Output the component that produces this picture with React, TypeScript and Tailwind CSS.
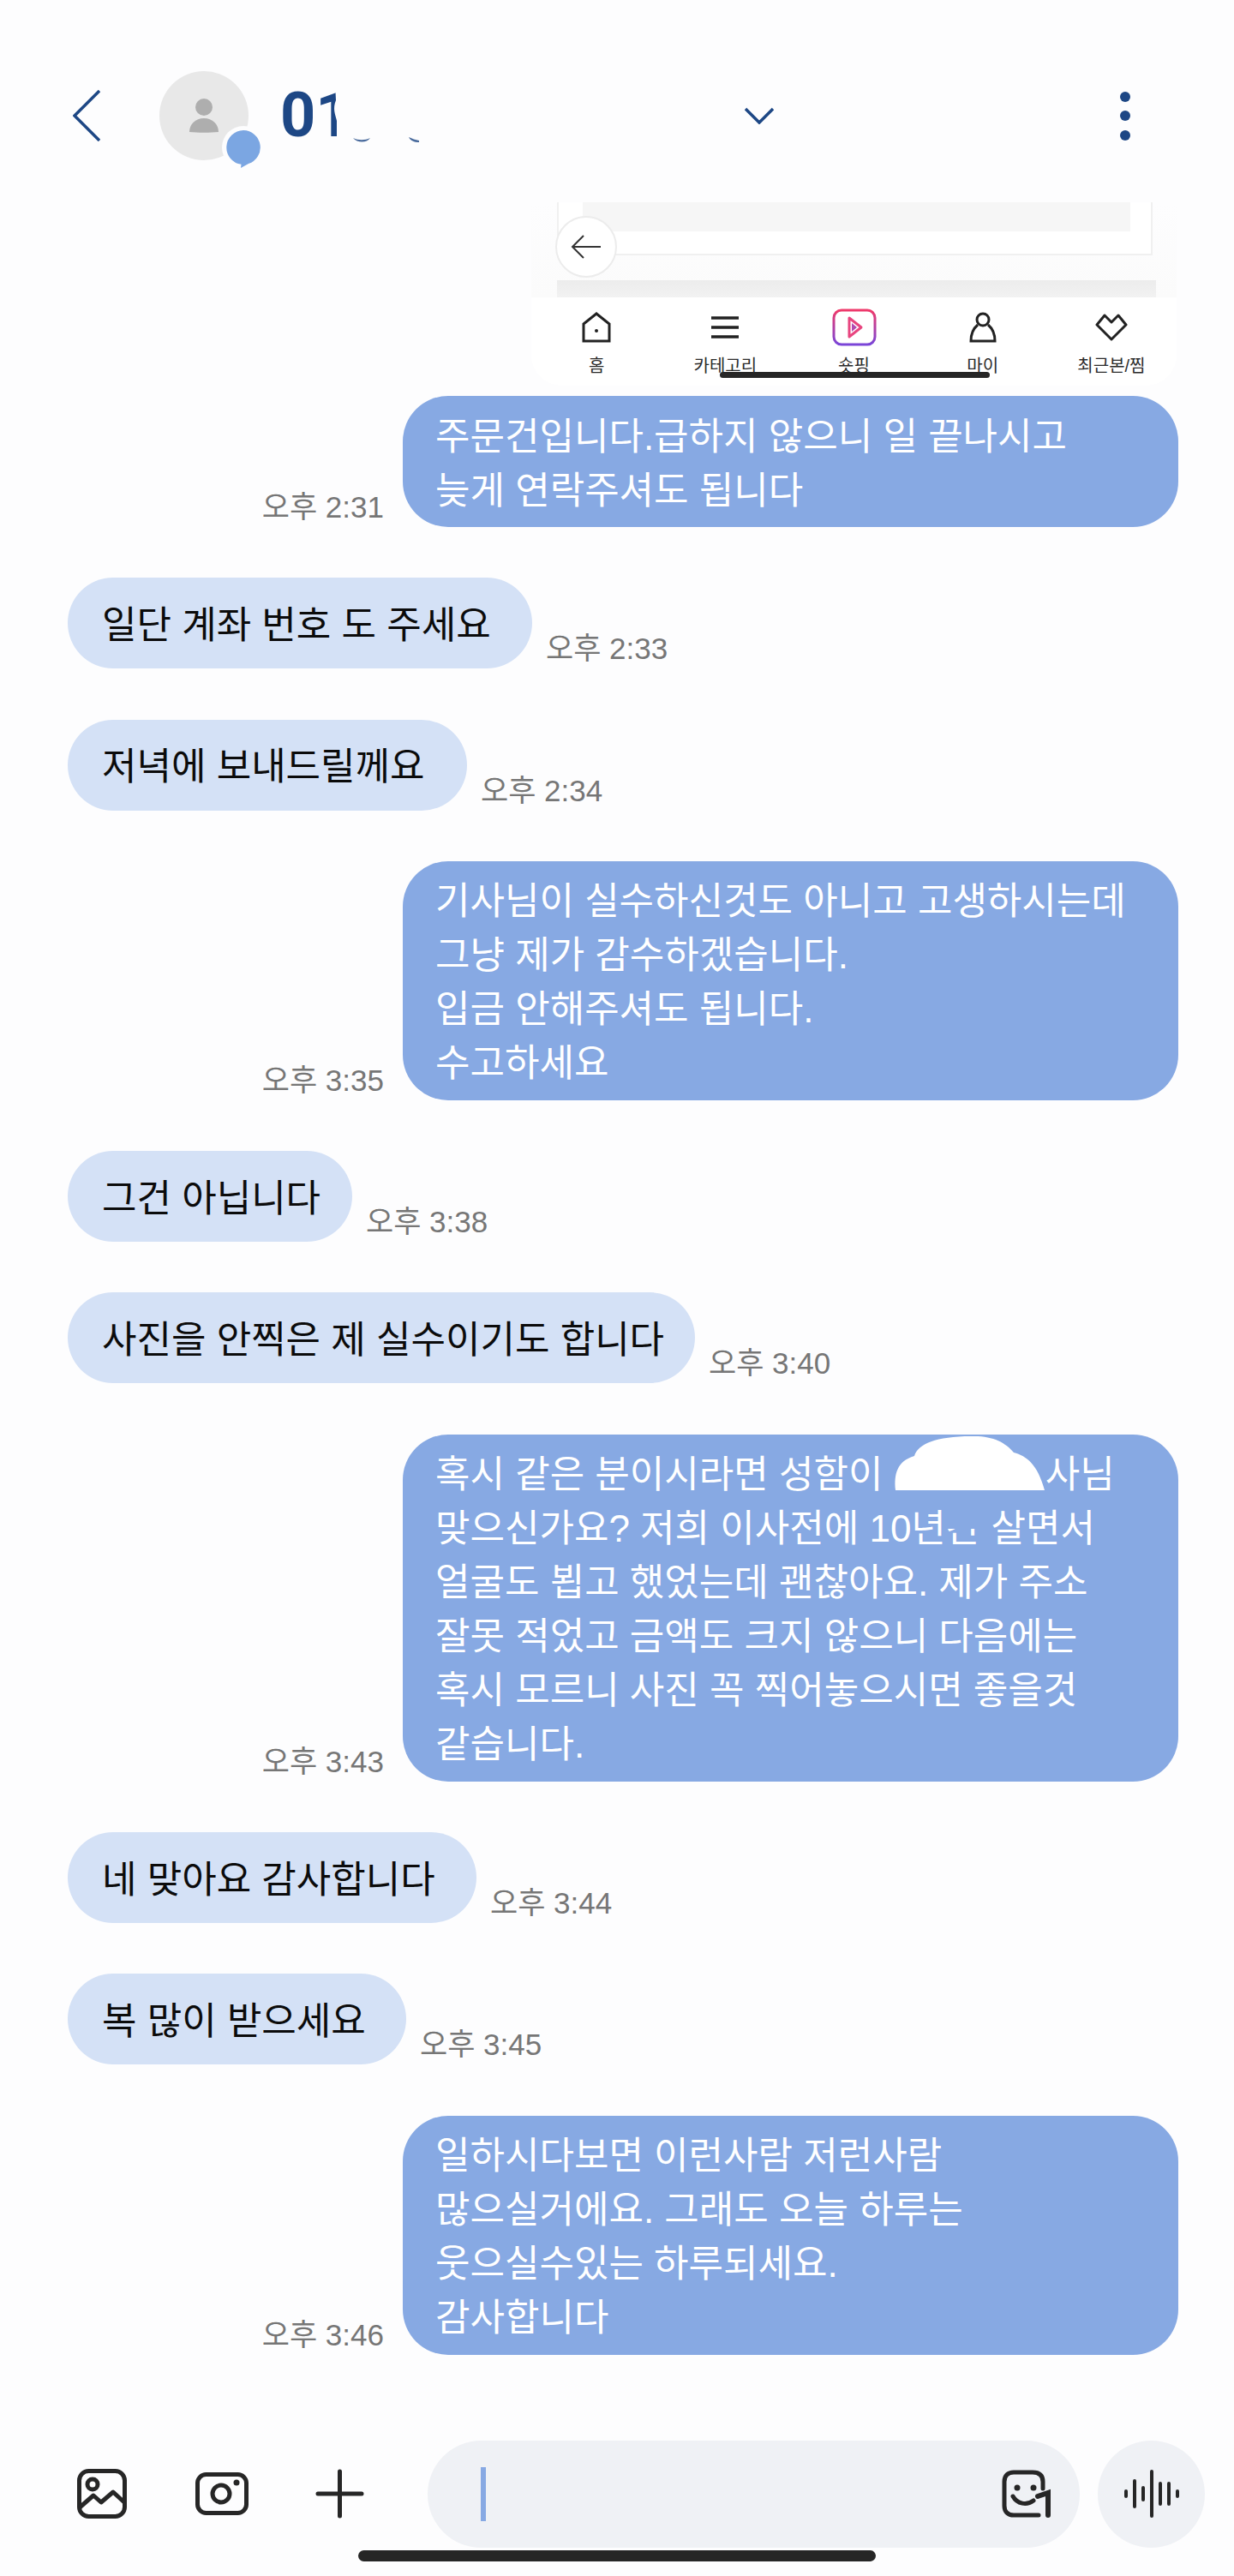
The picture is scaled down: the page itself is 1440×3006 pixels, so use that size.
function Time({ children }: { children: string }) {
  return <span className="mb-[3px] whitespace-nowrap text-[35px] leading-[40px] text-[#767676]">{children}</span>;
}

function Incoming({ text, time, width }: { text: string; time: string; width: string }) {
  return (
    <div className="flex items-end gap-[16px] pl-[79px]">
      <div className={`flex h-[106px] items-center rounded-[53px] bg-[#d4e1f6] pt-[4px] pl-[40px] whitespace-nowrap text-[#0b0b0b] ${width}`}>{text}</div>
      <Time>{time}</Time>
    </div>
  );
}

function Outgoing({ lines, time }: { lines: React.ReactNode[]; time: string }) {
  return (
    <div className="flex items-end justify-end gap-[22px] pr-[65px]">
      <Time>{time}</Time>
      <div className="w-[905px] rounded-[53px] bg-[#87a9e3] pt-[15.5px] pb-[11.5px] pl-[38px] text-white">
        {lines.map((line, i) => (
          <div key={i} className="whitespace-nowrap">{line}</div>
        ))}
      </div>
    </div>
  );
}

function NavItem({ label, children }: { label: string; children: React.ReactNode }) {
  return (
    <div className="flex w-[151px] flex-col items-center">
      <div className="flex h-[46px] items-center justify-center">{children}</div>
      <span className="mt-[9px] whitespace-nowrap text-[20px] leading-[26px] text-[#2b2b2b]">{label}</span>
    </div>
  );
}

function Attachment() {
  return (
    <div className="relative ml-auto mr-[67px] w-[753px] overflow-hidden rounded-b-[36px] bg-white">
      <div className="h-[111px] bg-gradient-to-b from-[#fdfdfe] to-[#fbfbfb] px-[30px]">
        <div className="ml-0 h-[62px] w-[695px] border-r-2 border-b-2 border-l-2 border-[#f0f0f0] bg-white px-[28px]">
          <div className="h-[34px] w-[639px] bg-[#f6f6f6]" />
        </div>
        <div className="mt-[29px] h-[20px] w-[699px] bg-gradient-to-b from-[#ececec] to-[#f2f2f2]" />
      </div>
      <div className="absolute top-[16px] left-[28px] flex h-[72px] w-[72px] items-center justify-center rounded-full border-2 border-[#ececec] bg-white">
        <svg width="38" height="30" viewBox="0 0 38 30" fill="none" stroke="#333" strokeWidth="2">
          <path d="M36 15H3M16 2 3 15l13 13" />
        </svg>
      </div>
      <div className="flex h-[103px] justify-between bg-white px-[1px] pt-[12px]">
        <NavItem label="홈">
          <svg width="34" height="36" viewBox="0 0 34 36" fill="none" stroke="#222" strokeWidth="3">
            <path d="M2 14 17 2l15 12v20H2z" />
            <circle cx="17" cy="22" r="2" fill="#222" stroke="none" />
          </svg>
        </NavItem>
        <NavItem label="카테고리">
          <svg width="34" height="28" viewBox="0 0 34 28" fill="none" stroke="#222" strokeWidth="3.5">
            <path d="M1 3h32M1 14h32M1 25h32" />
          </svg>
        </NavItem>
        <NavItem label="숏핑">
          <svg width="52" height="44" viewBox="0 0 52 44" fill="none">
            <defs>
              <linearGradient id="shop" x1="0" y1="0" x2="0" y2="1">
                <stop offset="0" stopColor="#ef3a6b" />
                <stop offset="1" stopColor="#7a45d8" />
              </linearGradient>
            </defs>
            <rect x="2" y="2" width="48" height="40" rx="9" stroke="url(#shop)" strokeWidth="3" />
            <path d="M20 11 34 22 20 33z" stroke="#e8457f" strokeWidth="3" strokeLinejoin="round" />
            <path d="M23 17 29 22 23 27z" fill="#b14bb0" />
          </svg>
        </NavItem>
        <NavItem label="마이">
          <svg width="32" height="36" viewBox="0 0 32 36" fill="none" stroke="#222" strokeWidth="3">
            <circle cx="16" cy="9" r="7" />
            <path d="M10 15C4 20 2 26 2 34h28c0-8-2-14-8-19" />
          </svg>
        </NavItem>
        <NavItem label="최근본/찜">
          <svg width="38" height="34" viewBox="0 0 38 34" fill="none" stroke="#222" strokeWidth="3">
            <path d="M19 31 2 14l9-11 8 8 8-8 9 11z" strokeLinejoin="round" />
          </svg>
        </NavItem>
      </div>
      <div className="absolute top-[198px] left-[220px] h-[7px] w-[315px] rounded-full bg-[#262626]" />
    </div>
  );
}

function Header() {
  return (
    <div className="flex h-[236px] items-center pt-[34px] pl-[85px] text-[#1d4785]">
      <svg width="32" height="60" viewBox="0 0 32 60" fill="none" stroke="currentColor" strokeWidth="3.5">
        <path d="M31 1 2 30l29 29" />
      </svg>
      <div className="relative ml-[69px] flex h-[104px] w-[104px] flex-col items-center justify-center rounded-full bg-[#e8e8e8]">
        <svg width="36" height="40" viewBox="0 0 36 40" fill="#aeaeae">
          <circle cx="18" cy="10" r="10" />
          <path d="M1 39c0-9 7-16 17-16s17 7 17 16c-10 1-24 1-34 0z" />
        </svg>
        <div className="absolute top-[64px] left-[73px] h-[50px] w-[50px] rounded-full bg-[#fdfdfe] p-[5px]">
          <svg width="40" height="44" viewBox="0 0 40 44" fill="#7ba6e2">
            <path d="M20 0a20 20 0 0 1 6 39l-9 5 .5-4.2A20 20 0 0 1 20 0z" />
          </svg>
        </div>
      </div>
      <div className="relative ml-[37px] h-[80px] w-[80px] font-['Roboto',sans-serif] text-[72px] leading-[80px] font-bold">
        01
        <svg width="62" height="70" viewBox="0 0 62 70" fill="#fdfdfe" className="absolute top-[2px] left-[56px]">
          <path d="M8 0h54v70H10V44C8 36 5 30 9 20z" />
        </svg>
        <svg width="90" height="8" viewBox="0 0 90 8" fill="currentColor" className="absolute top-[65px] left-[84px] opacity-80">
          <path d="M1 1c6 3 14 3 20 0-4 6-15 6-20 0zM66 0c4 2 8 3 12 4v2c-6 0-10-2-12-6z" />
        </svg>
      </div>
      <div className="ml-[462px]">
        <svg width="34" height="20" viewBox="0 0 34 20" fill="none" stroke="currentColor" strokeWidth="3.5">
          <path d="M1 2 17 18 33 2" />
        </svg>
      </div>
      <div className="ml-[404px] flex flex-col gap-[10.5px]">
        <span className="h-[12px] w-[12px] rounded-full bg-[#1d4785]" />
        <span className="h-[12px] w-[12px] rounded-full bg-[#1d4785]" />
        <span className="h-[12px] w-[12px] rounded-full bg-[#1d4785]" />
      </div>
    </div>
  );
}

function Composer() {
  return (
    <div className="mt-[100px] flex items-center pl-[90px]">
      <svg width="58" height="58" viewBox="0 0 58 58" fill="none" stroke="#262626" strokeWidth="5" className="shrink-0">
        <rect x="2.5" y="2.5" width="53" height="53" rx="11" />
        <circle cx="18" cy="18" r="6" />
        <path d="M3 45 19 31l9 8 14-12 13 12" strokeLinejoin="round" />
      </svg>
      <svg width="62" height="50" viewBox="0 0 62 50" fill="none" stroke="#262626" strokeWidth="5" className="ml-[80px] shrink-0">
        <rect x="2.5" y="2.5" width="57" height="45" rx="10" />
        <circle cx="30" cy="25" r="10" />
        <circle cx="48" cy="12" r="3.5" fill="#262626" stroke="none" />
      </svg>
      <svg width="57" height="58" viewBox="0 0 57 58" fill="none" stroke="#262626" strokeWidth="5" strokeLinecap="round" className="ml-[78px] shrink-0">
        <path d="M28.5 3v52M3 29h51" />
      </svg>
      <div className="ml-[74px] flex h-[125px] w-[761px] items-center justify-between rounded-full bg-[#eff1f5] pr-[33px] pl-[62px]">
        <div className="h-[63px] w-[6px] bg-[#87a9e3]" />
        <svg width="58" height="56" viewBox="0 0 58 56" fill="none" stroke="#262626" strokeWidth="5" strokeLinecap="round">
          <path d="M43 53H14C7 53 3 49 3 42V14C3 7 7 3 14 3h22c8 0 12 4 12 11v8" />
          <circle cx="18" cy="21" r="3.5" fill="#262626" stroke="none" />
          <circle cx="37" cy="21" r="3.5" fill="#262626" stroke="none" />
          <path d="M13 31c5 9 16 11 24 5" />
          <path d="M42 31 54 27v26" strokeWidth="6" />
        </svg>
      </div>
      <div className="ml-[21px] flex h-[125px] w-[125px] items-center justify-center rounded-full bg-[#eff1f5]">
        <svg width="66" height="58" viewBox="0 0 66 58" fill="none" stroke="#262626" strokeWidth="4" strokeLinecap="round">
          <path d="M3 26v6M13 14v30M23 22v14M33 3v52M43 17v24M53 17v24M63 26v6" />
        </svg>
      </div>
    </div>
  );
}

export default function App() {
  return (
    <div className="h-[3006px] w-[1440px] overflow-hidden bg-[#fdfdfe] font-['Liberation_Sans','Noto_Sans_CJK_KR',sans-serif] text-[44px] leading-[63px]">
      <Header />
      <Attachment />
      <div className="mt-[12px] flex flex-col gap-[59.3px]">
        <Outgoing time="오후 2:31" lines={["주문건입니다.급하지 않으니 일 끝나시고", "늦게 연락주셔도 됩니다"]} />
        <Incoming text="일단 계좌 번호 도 주세요" time="오후 2:33" width="w-[542px]" />
        <Incoming text="저녁에 보내드릴께요" time="오후 2:34" width="w-[466px]" />
        <Outgoing
          time="오후 3:35"
          lines={["기사님이 실수하신것도 아니고 고생하시는데", "그냥 제가 감수하겠습니다.", "입금 안해주셔도 됩니다.", "수고하세요"]}
        />
        <Incoming text="그건 아닙니다" time="오후 3:38" width="w-[332px]" />
        <Incoming text="사진을 안찍은 제 실수이기도 합니다" time="오후 3:40" width="w-[732px]" />
        <Outgoing
          time="오후 3:43"
          lines={[
            <>
              혹시 같은 분이시라면 성함이{" "}
              <span className="relative inline-block h-[40px] w-[177px]">
                <svg width="177" height="64" viewBox="0 0 177 64" fill="white" className="absolute -top-[21px] left-0">
                  <path d="M2 64C0 45 4 30 24 24 28 10 50 1 90 1c25-1 40 7 50 19 15 4 28 14 36 44z" />
                </svg>
              </span>
              사님
            </>,
            <>
              맞으신가요? 저희 이사전에 10년
              <span className="relative inline-block">
                간
                <span className="absolute top-[8px] left-0 h-[24px] w-full bg-[#87a9e3]" />
              </span>{" "}
              살면서
            </>,
            "얼굴도 뵙고 했었는데 괜찮아요. 제가 주소",
            "잘못 적었고 금액도 크지 않으니 다음에는",
            "혹시 모르니 사진 꼭 찍어놓으시면 좋을것",
            "같습니다.",
          ]}
        />
        <Incoming text="네 맞아요 감사합니다" time="오후 3:44" width="w-[477px]" />
        <Incoming text="복 많이 받으세요" time="오후 3:45" width="w-[395px]" />
        <Outgoing
          time="오후 3:46"
          lines={["일하시다보면 이런사람 저런사람", "많으실거에요. 그래도 오늘 하루는", "웃으실수있는 하루되세요.", "감사합니다"]}
        />
      </div>
      <Composer />
      <div className="mx-auto mt-[3px] h-[13px] w-[604px] rounded-full bg-[#262626]" />
    </div>
  );
}
